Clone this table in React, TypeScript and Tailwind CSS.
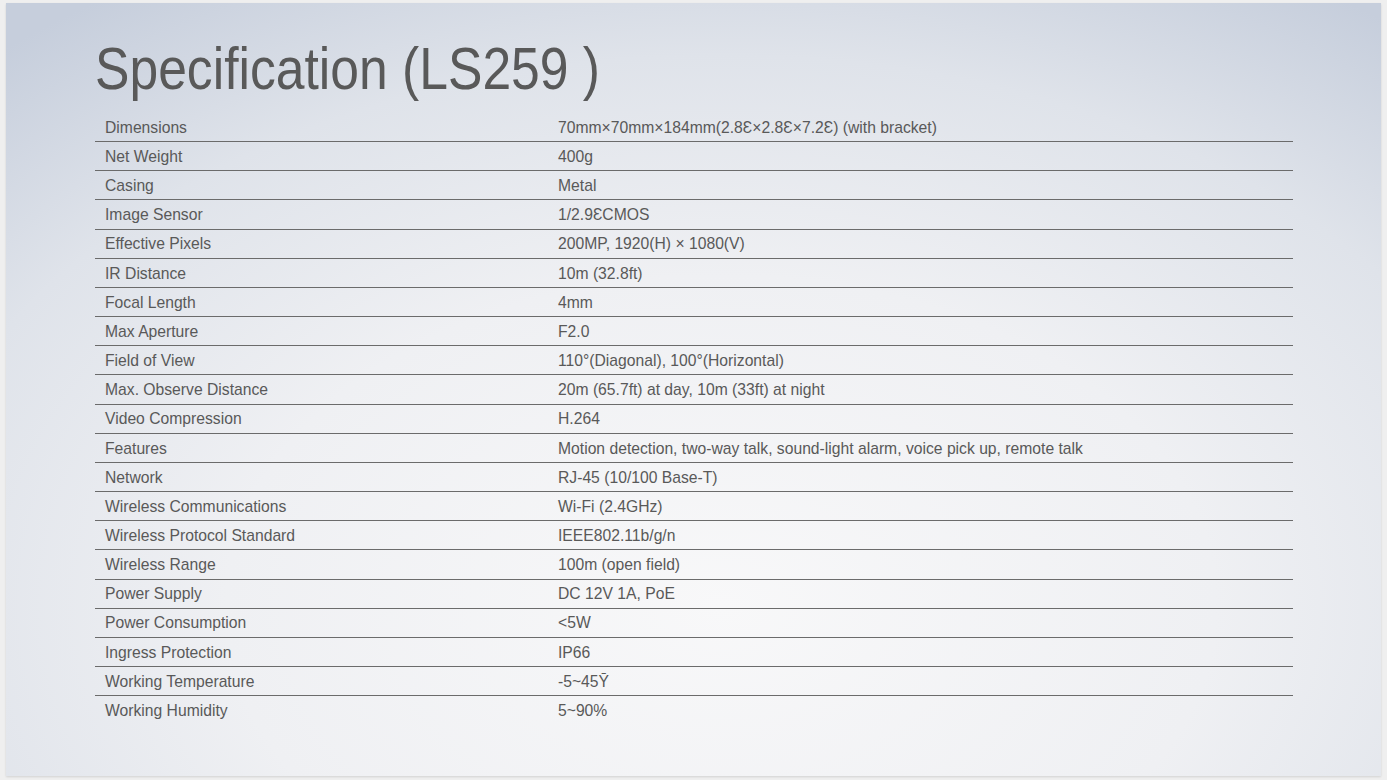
import React from 'react';

interface SpecRow {
  label: string;
  value: string;
}

const specs: SpecRow[] = [
  { label: 'Dimensions', value: '70mm×70mm×184mm(2.8Ɛ×2.8Ɛ×7.2Ɛ) (with bracket)' },
  { label: 'Net Weight', value: '400g' },
  { label: 'Casing', value: 'Metal' },
  { label: 'Image Sensor', value: '1/2.9ƐCMOS' },
  { label: 'Effective Pixels', value: '200MP, 1920(H) × 1080(V)' },
  { label: 'IR Distance', value: '10m (32.8ft)' },
  { label: 'Focal Length', value: '4mm' },
  { label: 'Max Aperture', value: 'F2.0' },
  { label: 'Field of View', value: '110°(Diagonal), 100°(Horizontal)' },
  { label: 'Max. Observe Distance', value: '20m (65.7ft) at day, 10m (33ft) at night' },
  { label: 'Video Compression', value: 'H.264' },
  { label: 'Features', value: 'Motion detection, two-way talk, sound-light alarm, voice pick up, remote talk' },
  { label: 'Network', value: 'RJ-45 (10/100 Base-T)' },
  { label: 'Wireless Communications', value: 'Wi-Fi (2.4GHz)' },
  { label: 'Wireless Protocol Standard', value: 'IEEE802.11b/g/n' },
  { label: 'Wireless Range', value: '100m (open field)' },
  { label: 'Power Supply', value: 'DC 12V 1A, PoE' },
  { label: 'Power Consumption', value: '<5W' },
  { label: 'Ingress Protection', value: 'IP66' },
  { label: 'Working Temperature', value: '-5~45Ȳ' },
  { label: 'Working Humidity', value: '5~90%' },
];

export default function App() {
  return (
    <div className="w-[1387px] h-[780px] bg-[#efefef] pt-[3px] pl-[6px] overflow-hidden font-['Liberation_Sans',Arial,sans-serif]">
      <div className="w-[1375px] h-[773px] shadow-[0_1px_2px_rgba(0,0,0,0.12)] bg-[radial-gradient(ellipse_80%_95%_at_52%_78%,#f8f8f9_0%,#eff0f3_45%,#dfe3ea_75%,#c6cedc_100%)] pl-[89px] pt-[37px]">
        {/* Title */}
        <h1 className="text-[59px] leading-[59px] text-[#595959] whitespace-nowrap origin-left scale-x-[0.875]">
          Specification (LS259 )
        </h1>

        {/* Spec table */}
        <div className="w-[1198px] mt-[14px] text-[15.7px] text-[#595959]">
          {specs.map((row, i) => (
            <div
              key={row.label}
              className={`flex items-center h-[29.16px] pt-[1px] ${
                i < specs.length - 1 ? 'border-b border-[#6b6b6b]' : ''
              }`}
            >
              <span className="w-[463px] pl-[10px] shrink-0 whitespace-nowrap">{row.label}</span>
              <span className="whitespace-nowrap">{row.value}</span>
            </div>
          ))}
        </div>
      </div>
    </div>
  );
}
